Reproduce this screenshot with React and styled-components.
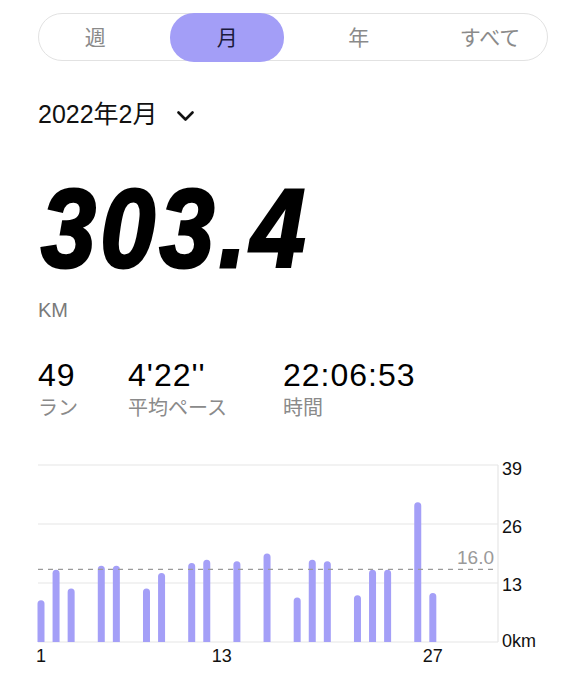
import React from "react";
import styled, { createGlobalStyle } from "styled-components";

const GlobalStyle = createGlobalStyle`
  body {
    margin: 0;
    background: #fff;
    font-family: "Liberation Sans", "Noto Sans CJK JP", sans-serif;
    color: #111;
  }
`;

const tabs = ["週", "月", "年", "すべて"];

const stats = [
  { value: "49", label: "ラン" },
  { value: "4'22''", label: "平均ペース" },
  { value: "22:06:53", label: "時間" },
];

// day of month -> km
const runs = [
  [1, 9.2], [2, 15.9], [3, 11.8], [5, 16.8], [6, 16.8], [8, 11.8],
  [9, 15.2], [11, 17.4], [12, 18.1], [14, 17.8], [16, 19.5], [18, 9.8],
  [19, 18.1], [20, 17.8], [22, 10.3], [23, 15.9], [24, 15.9], [26, 30.8],
  [27, 10.8],
];

const BASE = 185;
const UNIT = 177 / 39;
const PLOT_W = 460;
const dayX = (d) => 3 + (d - 1) * 15.07;
const yOf = (v) => BASE - v * UNIT;

const App = () => {
  return (
    <Page>
      <GlobalStyle />
      <Segmented>
        {tabs.map((t) => (
          <Tab key={t} active={t === "月"}>
            {t}
          </Tab>
        ))}
      </Segmented>

      <DateRow>
        <span>2022年2月</span>
        <svg width="17" height="10" viewBox="0 0 17 10">
          <polyline
            points="1.5,1.5 8.5,8.5 15.5,1.5"
            fill="none"
            stroke="#111"
            strokeWidth="2.6"
            strokeLinecap="round"
            strokeLinejoin="round"
          />
        </svg>
      </DateRow>

      <Distance>303.4</Distance>
      <Unit>KM</Unit>

      <Stats>
        {stats.map((s) => (
          <Stat key={s.label}>
            <StatValue>{s.value}</StatValue>
            <StatLabel>{s.label}</StatLabel>
          </Stat>
        ))}
      </Stats>

      <Chart width="510" height="215" viewBox="0 0 510 215">
        {[0, 13, 26, 39].map((v) => (
          <line
            key={v}
            x1="0"
            x2={PLOT_W}
            y1={yOf(v)}
            y2={yOf(v)}
            stroke="#e6e6e6"
            strokeWidth="1.2"
          />
        ))}
        <line x1={PLOT_W} x2={PLOT_W} y1={yOf(39)} y2={BASE} stroke="#e6e6e6" strokeWidth="1.2" />

        {runs.map(([d, v]) => {
          const x = dayX(d);
          const top = yOf(v);
          return (
            <path
              key={d}
              d={`M${x - 3.5},${BASE} V${top + 3.5} A3.5,3.5 0 0 1 ${x + 3.5},${top + 3.5} V${BASE} Z`}
              fill="#a49ff7"
            />
          );
        })}

        <line
          x1="0"
          x2="456"
          y1={yOf(16)}
          y2={yOf(16)}
          stroke="#9a9a9a"
          strokeWidth="1.2"
          strokeDasharray="5 5"
        />
        <AvgLabel x="456" y={yOf(16) - 5} textAnchor="end">
          16.0
        </AvgLabel>

        <AxisLabel x="464" y="18">39</AxisLabel>
        <AxisLabel x="464" y="75.5">26</AxisLabel>
        <AxisLabel x="464" y="133.5">13</AxisLabel>
        <AxisLabel x="464" y="190">0km</AxisLabel>

        {[1, 13, 27].map((d) => (
          <AxisLabel key={d} x={dayX(d)} y="205" textAnchor="middle">
            {d}
          </AxisLabel>
        ))}
      </Chart>
    </Page>
  );
};

const Page = styled.div`
  width: 586px;
  height: 696px;
  box-sizing: border-box;
  padding: 13px 38px 0;
  overflow: hidden;
`;

const Segmented = styled.div`
  height: 48px;
  box-sizing: border-box;
  border: 1.5px solid #e2e2e2;
  border-radius: 24px;
  display: flex;
  justify-content: space-between;
  align-items: stretch;
`;

const Tab = styled.div`
  width: 114px;
  margin: -1.5px 0;
  padding-bottom: 3px;
  box-sizing: border-box;
  border-radius: 24px;
  display: flex;
  align-items: center;
  justify-content: center;
  font-size: 21px;
  color: ${(p) => (p.active ? "#1b1a3d" : "#8a8a8a")};
  background: ${(p) => (p.active ? "#a39ef7" : "transparent")};
  &:first-child {
    margin-left: -1.5px;
    width: 115.5px;
  }
`;

const DateRow = styled.div`
  margin-top: 39px;
  display: flex;
  align-items: center;
  gap: 19px;
  font-size: 25px;
  line-height: 29px;
  color: #111;
  svg {
    margin-top: 2px;
  }
`;

const Distance = styled.div`
  margin-top: 45px;
  margin-left: 3px;
  font-size: 112px;
  line-height: 110px;
  font-weight: 700;
  font-style: italic;
  letter-spacing: 5px;
  color: #000;
  -webkit-text-stroke: 3px #000;
  transform: scaleX(0.88);
  transform-origin: left center;
  white-space: nowrap;
`;

const Unit = styled.div`
  margin-top: 14px;
  font-size: 20px;
  line-height: 24px;
  color: #7a7a7a;
`;

const Stats = styled.div`
  margin-top: 34px;
  display: grid;
  grid-template-columns: 90px 155px auto;
`;

const Stat = styled.div`
  display: flex;
  flex-direction: column;
`;

const StatValue = styled.div`
  font-size: 32px;
  line-height: 38px;
  letter-spacing: 1px;
  color: #000;
`;

const StatLabel = styled.div`
  margin-top: 2px;
  font-size: 20px;
  line-height: 24px;
  color: #8a8a8a;
`;

const Chart = styled.svg`
  display: block;
  margin-top: 37px;
  overflow: visible;
`;

const AxisLabel = styled.text`
  font-family: "Liberation Sans", sans-serif;
  font-size: 18px;
  fill: #111;
`;

const AvgLabel = styled.text`
  font-family: "Liberation Sans", sans-serif;
  font-size: 19px;
  fill: #9a9a9a;
`;

export default App;
